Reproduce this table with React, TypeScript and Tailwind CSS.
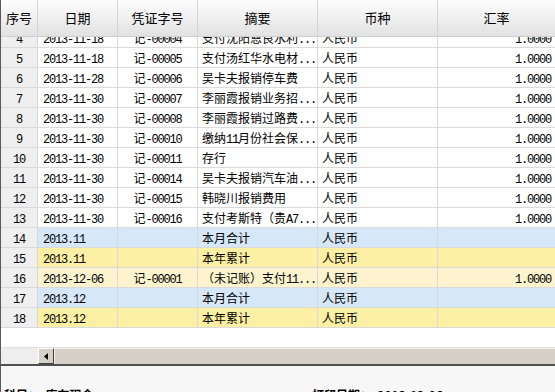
const rows = [
  { no: 4, date: "2013-11-18", voucher: "记-00004", summary: "支付沈阳恩良水利...", rate: "1.0000", tone: "plain" },
  { no: 5, date: "2013-11-18", voucher: "记-00005", summary: "支付汤红华水电材...", rate: "1.0000", tone: "plain" },
  { no: 6, date: "2013-11-28", voucher: "记-00006", summary: "吴卡夫报销停车费", rate: "1.0000", tone: "plain" },
  { no: 7, date: "2013-11-30", voucher: "记-00007", summary: "李丽霞报销业务招...", rate: "1.0000", tone: "plain" },
  { no: 8, date: "2013-11-30", voucher: "记-00008", summary: "李丽霞报销过路费...", rate: "1.0000", tone: "plain" },
  { no: 9, date: "2013-11-30", voucher: "记-00010", summary: "缴纳11月份社会保...", rate: "1.0000", tone: "plain" },
  { no: 10, date: "2013-11-30", voucher: "记-00011", summary: "存行", rate: "1.0000", tone: "plain" },
  { no: 11, date: "2013-11-30", voucher: "记-00014", summary: "吴卡夫报销汽车油...", rate: "1.0000", tone: "plain" },
  { no: 12, date: "2013-11-30", voucher: "记-00015", summary: "韩晓川报销费用", rate: "1.0000", tone: "plain" },
  { no: 13, date: "2013-11-30", voucher: "记-00016", summary: "支付考斯特（贵A7...", rate: "1.0000", tone: "plain" },
  { no: 14, date: "2013.11", voucher: "", summary: "本月合计", rate: "", tone: "month" },
  { no: 15, date: "2013.11", voucher: "", summary: "本年累计", rate: "", tone: "year" },
  { no: 16, date: "2013-12-06", voucher: "记-00001", summary: "（未记账）支付11...", rate: "1.0000", tone: "draft" },
  { no: 17, date: "2013.12", voucher: "", summary: "本月合计", rate: "", tone: "month" },
  { no: 18, date: "2013.12", voucher: "", summary: "本年累计", rate: "", tone: "year" },
];

const toneBg: Record<string, string> = {
  plain: "bg-white",
  month: "bg-[#d6e7f8]",
  year: "bg-[#fdf0a4]",
  draft: "bg-[#fdf4cf]",
};

// ascii runs get the narrow mono face so digits sit at 6px like SimSun
function Txt({ s }: { s: string }) {
  return (
    <>
      {s.split(/([\x20-\x7e]+)/).map((p, i) =>
        /^[\x20-\x7e]+$/.test(p) ? (
          <span key={i} className="font-['Liberation_Mono',monospace] tracking-[-1.2px]">
            {p}
          </span>
        ) : (
          p
        )
      )}
    </>
  );
}

export default function App() {
  return (
    <div className="w-[555px] h-[392px] overflow-hidden bg-white border-l border-[#5a5a5a] flex flex-col font-['Noto_Sans_CJK_SC','Liberation_Sans',sans-serif] text-[12px] text-black">
      {/* header */}
      <div className="flex h-[37px] shrink-0 bg-linear-to-b from-[#fdfdfd] to-[#e2e2e2] border-b border-[#cfcfcf] text-[13px] leading-[36px]">
        <div className="w-[37px] shrink-0 border-r border-[#d4d4d4] text-center">序号</div>
        <div className="w-[80px] shrink-0 border-r border-[#d4d4d4] text-center">日期</div>
        <div className="w-[80px] shrink-0 border-r border-[#d4d4d4] text-center">凭证字号</div>
        <div className="w-[120px] shrink-0 border-r border-[#d4d4d4] text-center">摘要</div>
        <div className="w-[120px] shrink-0 border-r border-[#d4d4d4] text-center">币种</div>
        <div className="flex-1 text-center">汇率</div>
      </div>

      {/* body */}
      <div className="h-[310px] shrink-0 overflow-hidden">
        <div className="-mt-[9px]">
          {rows.map((r) => (
            <div key={r.no} className="flex h-[20px] leading-[19px] border-b border-[#dadada]">
              <div className="w-[37px] shrink-0 bg-[#efefef] border-r border-[#d6d6d6] text-center">
                <Txt s={String(r.no)} />
              </div>
              <div className={`flex flex-1 ${toneBg[r.tone]}`}>
                <div className="w-[80px] shrink-0 border-r border-[#dadada] pl-[5px] whitespace-nowrap">
                  <Txt s={r.date} />
                </div>
                <div className="w-[80px] shrink-0 border-r border-[#dadada] text-center whitespace-nowrap">
                  <Txt s={r.voucher} />
                </div>
                <div className="w-[120px] shrink-0 border-r border-[#dadada] pl-[4px] whitespace-nowrap overflow-hidden">
                  <Txt s={r.summary} />
                </div>
                <div className="w-[120px] shrink-0 border-r border-[#dadada] pl-[4px]">人民币</div>
                <div className="flex-1 text-right pr-[4px]">
                  <Txt s={r.rate} />
                </div>
              </div>
            </div>
          ))}
        </div>
      </div>

      {/* horizontal scrollbar */}
      <div className="flex h-[17px] shrink-0 border-t border-[#e4dfda]">
        <div className="w-[37px] shrink-0 bg-[#eeeeee]" />
        <div className="w-[16px] shrink-0 bg-[#d4d0c8] border-t border-l border-white border-b border-r border-b-[#404040] border-r-[#404040] flex items-center justify-center">
          <svg width="4" height="7" viewBox="0 0 4 7">
            <path d="M4 0 L0 3.5 L4 7 Z" fill="#000" />
          </svg>
        </div>
        <div className="flex-1 bg-[#d4d0c8] border-l border-t border-[#f4f2ee]" />
      </div>

      {/* footer */}
      <div className="flex-1 bg-[#f7f7f7] border-t-2 border-[#505050] pt-[21px] pl-[3px] flex font-bold leading-[16px] whitespace-nowrap">
        <div className="w-[308px] shrink-0">科目：&nbsp;&nbsp;库存现金</div>
        <div>打印日期：&nbsp;&nbsp;2013-12-06</div>
      </div>
    </div>
  );
}
